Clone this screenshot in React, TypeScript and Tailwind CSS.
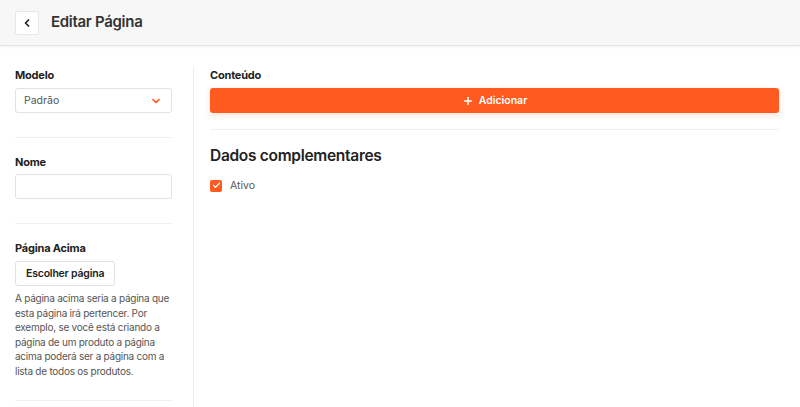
import React from 'react';
import { ChevronLeft, ChevronDown, Plus, Check } from 'lucide-react';

export default function App() {
  return (
    <div className="min-h-screen bg-white text-[#222] font-['Inter','Noto_Sans',sans-serif]">
      <header className="h-[46px] bg-[#f7f7f7] border-b border-[#e3e3e3] shadow-[0_1px_3px_rgba(0,0,0,0.06)] flex items-center px-[15px] gap-3">
        <button className="w-[24px] h-[24px] bg-white border border-[#e6e6e6] rounded-[2px] flex items-center justify-center text-[#222]">
          <ChevronLeft className="w-3 h-3" strokeWidth={3.5} />
        </button>
        <h1 className="text-[15px] font-semibold text-[#333] tracking-[-0.3px]">Editar Página</h1>
      </header>

      <div className="flex pt-[21px]">
        <aside className="w-[194px] shrink-0 border-r border-[#ececec] pl-[15px] pr-[21px] min-h-[340px]">
          <div className="pb-[24px] border-b border-[#f0f0f0]">
            <label className="block text-[11px] font-bold leading-[16px] mb-[5px] tracking-[-0.2px]">Modelo</label>
            <div className="h-[25px] border border-[#e2e2e2] rounded-[3px] flex items-center justify-between pl-[8px] pr-[9px] text-[10.5px] text-[#555]">
              <span>Padrão</span>
              <ChevronDown className="w-3 h-3 text-[#ff5a1f]" strokeWidth={3.5} />
            </div>
          </div>

          <div className="pt-[16px] pb-[24px] border-b border-[#f0f0f0]">
            <label className="block text-[11px] font-bold leading-[16px] mb-[4px] tracking-[-0.2px]">Nome</label>
            <input className="block w-full h-[25px] border border-[#e2e2e2] rounded-[3px] outline-none px-2 text-[11px]" />
          </div>

          <div className="pt-[16px] pb-[22px] border-b border-[#f0f0f0]">
            <label className="block text-[11px] font-bold leading-[16px] mb-[5px] tracking-[-0.2px]">Página Acima</label>
            <button className="block h-[25px] px-[10px] border border-[#e2e2e2] rounded-[3px] text-[10.5px] font-semibold tracking-[-0.2px] text-[#222] bg-white">
              Escolher página
            </button>
            <p className="mt-[5px] text-[10px] leading-[14.5px] tracking-[-0.25px] text-[#555]">
              A página acima seria a página que esta página irá pertencer. Por exemplo, se você está criando a página de um produto a página acima poderá ser a página com a lista de todos os produtos.
            </p>
          </div>
        </aside>

        <main className="flex-1 pl-[16px] pr-[21px]">
          <div className="pb-[16px] border-b border-[#f0f0f0]">
            <label className="block text-[11px] font-bold leading-[16px] mb-[5px] tracking-[-0.2px]">Conteúdo</label>
            <button className="w-full h-[25px] bg-[#ff5a1f] rounded-[3px] flex items-center justify-center gap-[5px] text-white text-[10.5px] font-semibold shadow-[0_2px_6px_rgba(255,90,31,0.2)]">
              <Plus className="w-3 h-3" strokeWidth={3} />
              Adicionar
            </button>
          </div>

          <h2 className="mt-[14px] text-[15.5px] leading-[24px] font-semibold text-[#222] tracking-[-0.3px]">Dados complementares</h2>
          <div className="mt-[10px] flex items-center gap-[8px]">
            <span className="w-[12px] h-[12px] rounded-[2px] bg-[#ff5a1f] flex items-center justify-center">
              <Check className="w-[9px] h-[9px] text-white" strokeWidth={3.5} />
            </span>
            <span className="text-[10.5px] text-[#555]">Ativo</span>
          </div>
        </main>
      </div>
    </div>
  );
}
